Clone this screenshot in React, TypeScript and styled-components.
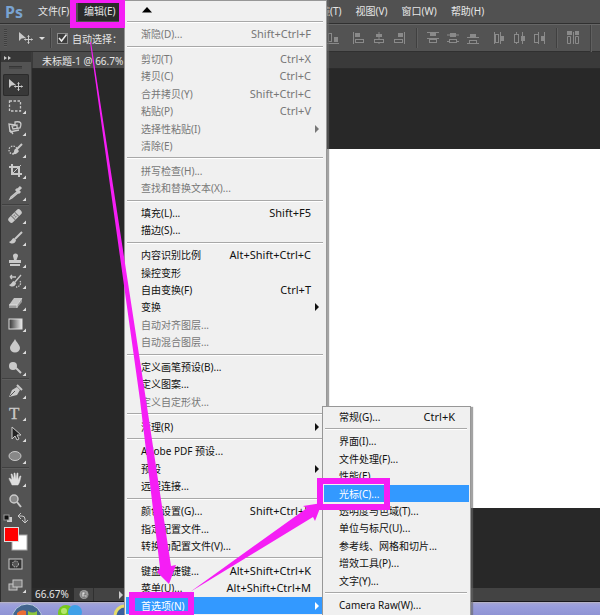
import React, { Fragment } from "react";
import styled, { createGlobalStyle, css } from "styled-components";

const GlobalStyle = createGlobalStyle`
  *, *::before, *::after { box-sizing: border-box; }
  body { margin: 0; background: #282828; }
  body, button, input { font-family: "Noto Sans", "Noto Sans CJK SC", sans-serif; font-size: 10px; }
  button { border: 0; padding: 0; background: none; color: inherit; text-align: left; }
  ul { list-style: none; margin: 0; padding: 0; }
`;

const Screen = styled.div`
  position: relative;
  display: flex;
  flex-direction: column;
  height: 100vh;
  overflow: hidden;
  color: #e6e6e6;
`;

const MenuBar = styled.header`
  display: grid;
  grid-template-columns: 33px 47px 230px auto;
  flex: none;
  align-items: center;
  height: 24px;
  background: #515151;
  border-bottom: 1px solid #303030;
`;

const Logo = styled.span`
  padding-left: 5px;
  color: #79a3d1;
  font-family: "Noto Sans", sans-serif;
  font-size: 16px;
  font-weight: 700;
  line-height: 22px;
`;

const BarGroup = styled.nav`
  display: flex;
  gap: 14px;
`;

const BarButton = styled.button<{ $open?: boolean }>`
  justify-self: start;
  height: 19px;
  line-height: 19px;
  white-space: nowrap;
  ${(p) => p.$open && css`
    margin-left: -2px;
    padding: 0 6px;
    background: #2b2b2b;
  `}
`;

const FileButton = styled(BarButton)`
  margin-left: 5px;
`;

const OptionsBar = styled.div`
  display: flex;
  flex: none;
  align-items: center;
  height: 28px;
  background: #535353;
  border-top: 1px solid #666;
  border-bottom: 1px solid #303030;
`;

const OptionsLeft = styled.div`
  display: flex;
  align-items: center;
  flex: none;
  width: 326px;
  padding-left: 4px;
`;

const Grip = styled.span`
  width: 3px;
  height: 18px;
  margin-right: 11px;
  background: repeating-linear-gradient(#3f3f3f 0 1px, #5c5c5c 1px 2px);
`;

const Caret = styled.span`
  margin: 0 5px 0 4px;
  border: 3px solid transparent;
  border-top-color: #ddd;
  border-bottom: 0;
`;

const Rule = styled.span`
  flex: none;
  width: 2px;
  height: 20px;
  background: #404040;
  border-right: 1px solid #606060;
`;

const EndRule = styled(Rule)`
  height: 27px;
  margin-left: 10px;
`;

const CheckLabel = styled.label`
  display: flex;
  align-items: center;
  gap: 4px;
  margin-left: 5px;
  white-space: nowrap;
`;

const Check = styled.input`
  appearance: none;
  width: 11px;
  height: 11px;
  margin: 0;
  border: 1px solid #8c8c8c;
  background: #3c3c3c;
  & + svg {
    visibility: hidden;
  }
  &:checked + svg {
    visibility: visible;
  }
`;

const CheckBox = styled.span`
  position: relative;
  display: flex;
  svg {
    position: absolute;
    inset: 0;
    pointer-events: none;
  }
`;

const AlignGroup = styled.div<{ $lead: number; $end?: number }>`
  display: flex;
  gap: 6px;
  margin-left: ${(p) => p.$lead}px;
  margin-right: ${(p) => p.$end || 0}px;
`;

const IconButton = styled.button`
  display: flex;
  flex: none;
  svg {
    display: block;
  }
`;

const Workspace = styled.div`
  display: grid;
  grid-template-columns: 32px minmax(0, 1fr);
  flex: 1;
  min-height: 0;
`;

const Toolbox = styled.aside`
  display: flex;
  flex-direction: column;
  min-height: 0;
  padding: 0 2px 5px 1px;
  background: #535353;
  border-left: 1px solid #2e2e2e;
  border-right: 1px solid #3c3c3c;
`;

const Expand = styled.button`
  flex: none;
  height: 10px;
  margin: 0 -2px 0 -1px;
  padding-left: 3px;
  background: #373737;
  svg {
    display: block;
  }
`;

const ToolGrip = styled.div`
  flex: none;
  height: 3px;
  margin: 4px 7px 5px;
  background: #454545;
  border-top: 1px solid #353535;
`;

const Tool = styled.button<{ $on?: boolean }>`
  display: flex;
  align-items: center;
  flex: 1 1 21px;
  min-height: 0;
  width: 26px;
  padding-left: 5px;
  margin-left: 1px;
  border-radius: 2px;
  ${(p) => p.$on && css`
    background: #383838;
    box-shadow: inset 0 0 0 1px #2b2b2b;
  `}
`;

const ToolRule = styled.div`
  flex: none;
  height: 2px;
  background: #404040;
  border-bottom: 1px solid #5d5d5d;
`;

const SwatchArea = styled.div`
  flex: none;
  height: 41px;
`;

const FootTool = styled(Tool)`
  flex: none;
  height: 22px;
`;

const Editor = styled.main`
  display: flex;
  flex-direction: column;
  min-width: 0;
`;

const TabStrip = styled.div`
  flex: none;
  height: 17px;
  background: #3a3a3a;
  border-bottom: 1px solid #2b2b2b;
`;

const Tab = styled.button`
  width: 150px;
  height: 16px;
  margin-left: 1px;
  padding-left: 9px;
  background: #4c4c4c;
  line-height: 18px;
`;

const Canvas = styled.div`
  display: flex;
  flex: 1;
  min-height: 0;
  padding: 80px 0 80px 200px;
  background: #282828;
`;

const Paper = styled.div`
  flex: 1;
  background: #fff;
`;

const Status = styled.footer`
  display: flex;
  align-items: center;
  flex: none;
  height: 14px;
  background: #434343;
  border-bottom: 1px solid #18181c;
`;

const Zoom = styled.span`
  width: 42px;
  height: 13px;
  padding-left: 3px;
  background: #2b2b2b;
  line-height: 13px;
`;

const StatusIcon = styled.span`
  display: flex;
  width: 20px;
  height: 13px;
  justify-content: center;
  border-right: 1px solid #303030;
`;

const StatusMore = styled.span`
  margin-left: 25px;
  border: 4px solid transparent;
  border-left-color: #ccc;
  border-right: 0;
`;

const Taskbar = styled.div`
  flex: none;
  height: 13px;
  background: linear-gradient(#a5a5d4, #9a9edc 3px, #8f93d4);
  border-top: 1px solid #b5b2c8;
  overflow: hidden;
  svg {
    display: block;
  }
`;

const panel = css`
  position: absolute;
  display: flex;
  flex-direction: column;
  background: #f0f0f0;
  border: 1px solid #979797;
  border-bottom: 0;
  color: #111;
`;

const EditMenu = styled.ul`
  ${panel}
  top: 0;
  bottom: 0;
  left: 124px;
  width: 203px;
  padding: 0 1px 1px;
  box-shadow: 2px 0 1px #66666699;
`;

const SubMenu = styled.ul`
  ${panel}
  top: 406px;
  bottom: 0;
  left: 322px;
  width: 149px;
  padding: 1px 1px;
  box-shadow: 2px 1px 1px #66666699;
`;

const ScrollUp = styled.li`
  flex: none;
  height: 17px;
  padding: 6px 0 0 16px;
  svg {
    display: block;
  }
`;

const MenuRow = styled.li`
  display: flex;
  flex: 1 0 17px;
`;

const MenuButton = styled.button<{ $off?: boolean; $active?: boolean }>`
  display: flex;
  align-items: center;
  flex: 1;
  position: relative;
  padding: 0 14px 0 15px;
  white-space: nowrap;
  line-height: 16px;
  color: ${(p) => (p.$active ? "#fff" : p.$off ? "#777" : "#111")};
  background: ${(p) => (p.$active ? "#3399ff" : "transparent")};
`;

const Shortcut = styled.span`
  margin-left: auto;
  font-size: 11px;
`;

const Pointer = styled.span`
  position: absolute;
  right: 6px;
  border: 4px solid transparent;
  border-left-color: currentColor;
  border-right: 0;
`;

const MenuRule = styled.li`
  flex: 1 0 7px;
  display: flex;
  align-items: center;
  &::before {
    content: "";
    flex: 1;
    height: 2px;
    margin: 0 2px 0 1px;
    background: #a8a8a8;
    border-bottom: 1px solid #fff;
  }
`;

const Marks = styled.svg`
  position: absolute;
  top: 0;
  left: 0;
  pointer-events: none;
`;

type Item = { t: string; k?: string; off?: boolean; sub?: boolean; active?: boolean };

const editGroups: Item[][] = [
  [{ t: "渐隐(D)...", k: "Shift+Ctrl+F", off: true }],
  [
    { t: "剪切(T)", k: "Ctrl+X", off: true },
    { t: "拷贝(C)", k: "Ctrl+C", off: true },
    { t: "合并拷贝(Y)", k: "Shift+Ctrl+C", off: true },
    { t: "粘贴(P)", k: "Ctrl+V", off: true },
    { t: "选择性粘贴(I)", off: true, sub: true },
    { t: "清除(E)", off: true },
  ],
  [{ t: "拼写检查(H)...", off: true }, { t: "查找和替换文本(X)...", off: true }],
  [{ t: "填充(L)...", k: "Shift+F5" }, { t: "描边(S)..." }],
  [
    { t: "内容识别比例", k: "Alt+Shift+Ctrl+C" },
    { t: "操控变形" },
    { t: "自由变换(F)", k: "Ctrl+T" },
    { t: "变换", sub: true },
    { t: "自动对齐图层...", off: true },
    { t: "自动混合图层...", off: true },
  ],
  [{ t: "定义画笔预设(B)..." }, { t: "定义图案..." }, { t: "定义自定形状...", off: true }],
  [{ t: "清理(R)", sub: true }],
  [{ t: "Adobe PDF 预设..." }, { t: "预设", sub: true }, { t: "远程连接..." }],
  [{ t: "颜色设置(G)...", k: "Shift+Ctrl+K" }, { t: "指定配置文件..." }, { t: "转换为配置文件(V)..." }],
  [
    { t: "键盘快捷键...", k: "Alt+Shift+Ctrl+K" },
    { t: "菜单(U)...", k: "Alt+Shift+Ctrl+M" },
    { t: "首选项(N)", sub: true, active: true },
  ],
];

const prefGroups: Item[][] = [
  [{ t: "常规(G)...", k: "Ctrl+K" }],
  [
    { t: "界面(I)..." },
    { t: "文件处理(F)..." },
    { t: "性能(E)..." },
    { t: "光标(C)...", active: true },
    { t: "透明度与色域(T)..." },
    { t: "单位与标尺(U)..." },
    { t: "参考线、网格和切片..." },
    { t: "增效工具(P)..." },
    { t: "文字(Y)..." },
  ],
  [{ t: "Camera Raw(W)..." }],
];

function Groups({ groups, lead }: { groups: Item[][]; lead?: boolean }) {
  return (
    <>
      {groups.map((g, i) => (
        <Fragment key={i}>
          {(i > 0 || lead) && <MenuRule role="separator" />}
          {g.map((it) => (
            <MenuRow key={it.t}>
              <MenuButton $off={it.off} $active={it.active} disabled={it.off}>
                {it.t}
                {it.k && <Shortcut>{it.k}</Shortcut>}
                {it.sub && <Pointer />}
              </MenuButton>
            </MenuRow>
          ))}
        </Fragment>
      ))}
    </>
  );
}

const C = "#c9c9c9";
const s = { fill: "none", stroke: C, strokeWidth: 1.3 };

const moveIcon = (
  <>
    <path d="M1 2v9l2.5-2.5L8 8z" fill={C} />
    <path d="M10.500 5.500v8M6.500 9.500h8M9.500 6.500l1-1 1 1M9.500 12.500l1 1 1-1M7.500 8.500l-1 1 1 1M13.500 8.500l1 1-1 1" fill="none" stroke={C} />
  </>
);

const toolIcons: [string, React.ReactNode][][] = [
  [
    ["移动", moveIcon],
    ["矩形选框", <rect x="1.500" y="3" width="11" height="10" {...s} strokeDasharray="2.500 1.500" />],
    ["套索", <path d="M2 12 1 4l6 1V2c6-1 7 1 5 6l-7 1-1-3 5-1v4M2 12l9-2M2 10l3 4" {...s} />],
    ["快速选择", <><circle cx="5" cy="8" r="4" {...s} strokeDasharray="1.500 1.200" /><path d="m14 2-6 6" {...s} strokeWidth="2" /><path d="M9 7c-2-1-3 1-3 3l-2 2c3 1 6-1 7-3z" fill={C} /></>],
    ["裁剪", <><path d="M4 1v10h10M1 4h10v10" {...s} strokeWidth="2" /><path d="m5 10 8-8" {...s} strokeWidth="1" /></>],
    ["吸管", <><path d="m10 6-7 6-1 2 2-1 7-6" {...s} /><path d="m8 4 4 4M10 5l3-3" stroke={C} strokeWidth="3" /></>],
  ],
  [
    ["修复画笔", <g transform="rotate(-45 7 8)"><rect x="-1" y="5" width="16" height="6" rx="2.500" fill={C} /><path d="M4.500 5v6M9.500 5v6" stroke="#777" /><path d="M6 7h2M6 9h2" stroke="#777" /></g>],
    ["画笔", <><path d="m14 2-7 7" {...s} strokeWidth="2" /><path d="M6 8c-2 0-2 3-5 4 3 3 7 1 7-2z" fill={C} /></>],
    ["仿制图章", <path d="M5 4a2.500 2.500 0 1 1 5 0L8.500 8H13v3H1V8h5zM2 12h10v2H2z" fill={C} />],
    ["历史画笔", <><path d="m13 2-6 7M2 4h6M2 4l2-2M2 4l2 2" {...s} /><path d="M12 8c2 3-1 6-4 6" {...s} strokeDasharray="1.500 1" /><path d="M6 8c-2 0-2 3-5 4 3 3 7 1 7-2z" fill={C} /></>],
    ["橡皮擦", <><path d="m1 10 5-7h8l-5 7z" fill="#c4c4c4" /><path d="M1 10h8l5-7v4l-5 6H1z" fill="#999" /><path d="M1 10h8l5-7M9 10v3" fill="none" stroke="#eee" strokeWidth=".700" /></>],
    ["渐变", <rect x="1" y="3" width="13" height="10" fill="url(#tone)" stroke="#ddd" />],
    ["模糊", <path d="M7 1c2 4 5 6 5 9a5 4.500 0 0 1-10 0c0-3 3-5 5-9z" fill={C} />],
    ["减淡", <><circle cx="5" cy="6" r="4" fill={C} /><path d="m8 8 5 5" stroke={C} strokeWidth="2" /></>],
  ],
  [
    ["钢笔", <><path d="M1 14 4 7l5-3 3 3-3 5z" fill={C} /><path d="m2 13 5-5" stroke="#555" /><path d="m9 2 5 5" stroke={C} strokeWidth="2" /></>],
    ["文字", null],
    ["路径选择", <path d="M4 1v12l3-3 2 4 2-1-2-4h4z" fill="#222" stroke={C} />],
    ["椭圆", <ellipse cx="7" cy="8" rx="6" ry="4.500" fill="#888" stroke={C} />],
  ],
  [
    ["抓手", <path d="M4 14C3 11 1 9 1 7l2 1 1 1-1-6h1l2 5V2h1l1 6 1-6h1v7l2-4h1c-1 4-1 6-3 9z" fill="#ddd" stroke="#ddd" strokeWidth=".500" />],
    ["缩放", <><circle cx="6" cy="6" r="4" fill="#888" stroke={C} strokeWidth="1.500" /><path d="m9 9 4 5" stroke={C} strokeWidth="2" /></>],
  ],
];

function ToolIcon({ name, art, corner }: { name: string; art: React.ReactNode; corner: boolean }) {
  return (
    <svg width="21" height="20" viewBox="0 -2 21 20" aria-hidden="true">
      {name === "文字" ? (
        <text x="1" y="14" fontFamily="Liberation Serif, serif" fontSize="17" fill={C} stroke={C} strokeWidth=".300">T</text>
      ) : art}
      {corner && <path d="M18 12.500v3.500h-3.500z" fill="#ddd" />}
    </svg>
  );
}

const A = "#8a8a8a";
const F = "#505050";
const alignNames = ["左", "中", "右"];
const alignArt = [
  <><path d="M1.500 1v12" stroke={A} /><rect x="3" y="2" width="5" height="4" fill={A} /><rect x="3.500" y="8.500" width="8" height="3" fill={F} stroke={A} /></>,
  <><path d="M7 1v12" stroke={A} /><rect x="4" y="3" width="6" height="3" fill={A} /><rect x="2.500" y="8.500" width="9" height="3" fill={F} stroke={A} /></>,
  <><path d="M12.500 1v12" stroke={A} /><rect x="6" y="2" width="5" height="4" fill={A} /><rect x="2.500" y="8.500" width="8" height="3" fill={F} stroke={A} /></>,
];
const stackArt = [
  <><path d="M1 1.500h12M1 7.500h12" stroke={A} /><rect x="4" y="2" width="6" height="3" fill={A} /><rect x="3.500" y="8.500" width="7" height="3" fill={F} stroke={A} /></>,
  <><path d="M1 4h12M1 10.500h12" stroke={A} /><rect x="4" y="2" width="6" height="4" fill={A} /><rect x="3.500" y="8.500" width="7" height="3" fill={F} stroke={A} /></>,
  <><path d="M1 6.500h12M1 12.500h12" stroke={A} /><rect x="4" y="3" width="6" height="3" fill={A} /><rect x="3.500" y="9.500" width="7" height="3" fill={F} stroke={A} /></>,
];
const spreadArt = [
  <><path d="M2.500 1v12M8.500 1v12" stroke={A} /><rect x="3.500" y="3.500" width="3" height="8" fill={F} stroke={A} /><rect x="9" y="5" width="3" height="5" fill={A} /></>,
  <><path d="M4.500 1v12M10.500 1v12" stroke={A} /><rect x="2.500" y="3.500" width="4" height="8" fill={F} stroke={A} /><rect x="9" y="5" width="4" height="5" fill={A} /></>,
  <><path d="M6.500 1v12M12.500 1v12" stroke={A} /><rect x="2.500" y="3.500" width="4" height="8" fill={F} stroke={A} /><rect x="9" y="5" width="3" height="5" fill={A} /></>,
];

function AlignIcons({ art, kind }: { art: React.ReactNode[]; kind: string }) {
  return (
    <>
      {art.map((shape, n) => (
        <IconButton key={n} aria-label={alignNames[n] + kind}>
          <svg width="14" height="14" viewBox="0 0 14 14" aria-hidden="true">{shape}</svg>
        </IconButton>
      ))}
    </>
  );
}

export default function App() {
  return (
    <Screen>
      <GlobalStyle />
      <MenuBar>
        <Logo>Ps</Logo>
        <FileButton>文件(F)</FileButton>
        <BarButton $open>编辑(E)</BarButton>
        <BarGroup>
          <BarButton>滤镜(T)</BarButton>
          <BarButton>视图(V)</BarButton>
          <BarButton>窗口(W)</BarButton>
          <BarButton>帮助(H)</BarButton>
        </BarGroup>
      </MenuBar>
      <OptionsBar>
        <OptionsLeft>
          <Grip />
          <svg width="17" height="16" viewBox="0 0 17 16" aria-hidden="true">{moveIcon}</svg>
          <Caret />
          <Rule />
          <CheckLabel>
            <CheckBox>
              <Check type="checkbox" defaultChecked />
              <svg width="11" height="11" viewBox="0 0 11 11" aria-hidden="true"><path d="m2 5 2.500 3L9.500 1.500" fill="none" stroke="#eee" strokeWidth="1.500" /></svg>
            </CheckBox>
            自动选择：
          </CheckLabel>
        </OptionsLeft>
        <AlignGroup $lead={0}>
          <IconButton aria-label="底对齐">
            <svg width="14" height="14" viewBox="0 0 14 14" aria-hidden="true">
              <path d="M1 12.500h12" stroke={A} />
              <rect x="2.500" y="2.500" width="3" height="8" fill={F} stroke={A} />
              <rect x="8" y="6" width="4" height="5" fill={A} />
            </svg>
          </IconButton>
        </AlignGroup>
        <AlignGroup $lead={12} $end={10}>
          <AlignIcons art={alignArt} kind="对齐" />
        </AlignGroup>
        <Rule />
        <AlignGroup $lead={8}>
          <AlignIcons art={stackArt} kind="垂直分布" />
        </AlignGroup>
        <AlignGroup $lead={12} $end={10}>
          <AlignIcons art={spreadArt} kind="水平分布" />
        </AlignGroup>
        <Rule />
        <AlignGroup $lead={8}>
          <IconButton aria-label="自动对齐">
            <svg width="14" height="14" viewBox="0 0 14 14" aria-hidden="true">
              <path d="M1 0h5v4H1zM9 0h4v4H9z" fill={A} />
              <path d="M1.500 5.500h3v7h-3zM9.500 5.500h3v7h-3zM7.500 1v12" fill="none" stroke={A} />
            </svg>
          </IconButton>
        </AlignGroup>
        <EndRule />
      </OptionsBar>
      <Workspace>
        <Toolbox>
          <Expand aria-label="展开">
            <svg width="8" height="9" viewBox="0 0 8 9"><path d="M0 3l3 2-3 2zM4 3l3 2-3 2z" fill="#ccc" /></svg>
          </Expand>
          <ToolGrip />
          {toolIcons.map((g, i) => (
            <Fragment key={i}>
              {i > 0 && <ToolRule />}
              {g.map(([name, art], j) => (
                <Tool key={name} $on={i === 0 && j === 0} aria-label={name}>
                  <ToolIcon name={name} art={art} corner={name !== "移动" && name !== "缩放"} />
                </Tool>
              ))}
            </Fragment>
          ))}
          <SwatchArea>
            <svg width="27" height="41" viewBox="0 0 27 41" role="img" aria-label="前景色与背景色">
              <defs>
                <linearGradient id="tone"><stop stopColor="#333" /><stop offset="1" stopColor="#eee" /></linearGradient>
              </defs>
              <rect x="5" y="5" width="5" height="5" fill="#ccc" />
              <rect x="2" y="3" width="5" height="5" fill="#111" stroke="#999" />
              <path d="M17 4h3q3 0 3 3v3M19 1l-3 3 3 3M20 8l3 3 3-3" fill="none" stroke={C} />
              <rect x="10" y="23" width="15" height="15" fill="#fff" stroke="#aaa" />
              <rect x="2.500" y="15.500" width="14" height="14" fill="#f00" stroke="#ddd" />
            </svg>
          </SwatchArea>
          <FootTool aria-label="快速蒙版">
            <svg width="21" height="20" viewBox="0 0 21 20"><rect x="1" y="5" width="13" height="10" fill="#333" stroke={C} /><circle cx="7.500" cy="10" r="3" fill="#555" stroke={C} strokeDasharray="1.500 1" /></svg>
          </FootTool>
          <FootTool aria-label="屏幕模式">
            <svg width="21" height="20" viewBox="0 0 21 20"><rect x="1" y="8" width="8" height="6" fill="#777" stroke={C} /><rect x="5" y="4" width="9" height="7" fill="#777" stroke={C} /><path d="M18 13.500v3.500h-3.500z" fill="#ddd" /></svg>
          </FootTool>
        </Toolbox>
        <Editor>
          <TabStrip><Tab>未标题-1 @ 66.7%</Tab></TabStrip>
          <Canvas><Paper /></Canvas>
          <Status>
            <Zoom>66.67%</Zoom>
            <StatusIcon>
              <svg width="12" height="13" viewBox="0 0 12 13" aria-hidden="true"><circle cx="6" cy="6.500" r="4.500" fill="#999" /><path d="M4 4h3v5H4zM6 6l4 2-4 2z" fill="#ddd" stroke="#555" strokeWidth=".500" /></svg>
            </StatusIcon>
            <StatusMore />
          </Status>
        </Editor>
      </Workspace>
      <Taskbar>
        <svg width="140" height="13" viewBox="0 0 140 13" aria-hidden="true">
          <circle cx="27" cy="16" r="15" fill="#42658e" stroke="#bccbe0" />
          <path d="M17 10q4-4 9-2v6h-9z" fill="#e96c36" />
          <path d="M28 8q5 3 9 0v6h-9z" fill="#8dc63c" />
          <circle cx="66" cy="10" r="8" fill="#77c81e" />
          <circle cx="75" cy="9" r="7" fill="#3fa0e8" />
          <circle cx="64" cy="8" r="3" fill="#b4e66b" />
          <circle cx="125" cy="13" r="10" fill="#3c5e9c" stroke="#e6dd68" strokeWidth="3" />
        </svg>
      </Taskbar>
      <EditMenu>
        <ScrollUp><svg width="10" height="6" viewBox="0 0 10 6" aria-hidden="true"><path d="M0 5.500 5 0l5 5.500z" fill="#000" /></svg></ScrollUp>
        <Groups groups={editGroups} lead />
      </EditMenu>
      <SubMenu>
        <Groups groups={prefGroups} />
      </SubMenu>
      <Marks width="600" height="615" viewBox="0 0 600 615" aria-hidden="true">
        <g fill="none" stroke="#f51ef5" strokeWidth="6">
          <rect x="73" y="0" width="49" height="25" />
          <rect x="132" y="595" width="59" height="19" />
          <rect x="320" y="481" width="67" height="26" />
        </g>
        <path d="M90 42 140 400 160 568 157 572 169 584 176 565 171 566 146 400 91 42z" fill="#f51ef5" />
        <path d="M190 592 307 508 303 506 322 503 315 521 313 517z" fill="#f51ef5" />
      </Marks>
    </Screen>
  );
}
